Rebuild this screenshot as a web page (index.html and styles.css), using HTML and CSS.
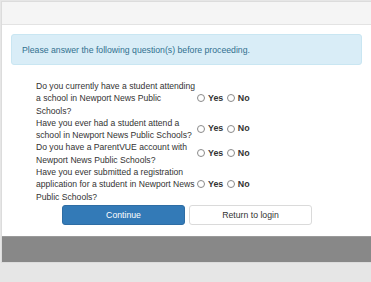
FILE: index.html
```html
<!DOCTYPE html>
<html lang="en">
<head>
    <meta charset="UTF-8">
    <title>Registration Questions</title>
    <link rel="stylesheet" href="styles.css">
</head>
<body>
    <div class="panel">
        <div class="panel-heading"></div>
        <div class="panel-body">
            <div class="alert">Please answer the following question(s) before proceeding.</div>
            <table class="questions">
                <tr>
                    <td class="question">Do you currently have a student attending a school in Newport News Public Schools?</td>
                    <td class="answer">
                        <label><input type="radio" name="q1"> Yes</label>
                        <label><input type="radio" name="q1"> No</label>
                    </td>
                </tr>
                <tr>
                    <td class="question">Have you ever had a student attend a school in Newport News Public Schools?</td>
                    <td class="answer">
                        <label><input type="radio" name="q2"> Yes</label>
                        <label><input type="radio" name="q2"> No</label>
                    </td>
                </tr>
                <tr>
                    <td class="question">Do you have a ParentVUE account with Newport News Public Schools?</td>
                    <td class="answer">
                        <label><input type="radio" name="q3"> Yes</label>
                        <label><input type="radio" name="q3"> No</label>
                    </td>
                </tr>
                <tr>
                    <td class="question">Have you ever submitted a registration application for a student in Newport News Public Schools?</td>
                    <td class="answer">
                        <label><input type="radio" name="q4"> Yes</label>
                        <label><input type="radio" name="q4"> No</label>
                    </td>
                </tr>
            </table>
            <div class="buttons">
                <button class="btn btn-primary">Continue</button>
                <button class="btn btn-default">Return to login</button>
            </div>
        </div>
        <div class="panel-footer"></div>
    </div>
</body>
</html>
```

FILE: styles.css
```css
* {
    margin: 0;
    padding: 0;
    box-sizing: border-box;
}

body {
    font-family: 'Liberation Sans', Arial, sans-serif;
    background: #e6e6e6;
    color: #333;
    overflow: hidden;
}

.panel {
    margin: 1px 0 0 1px;
    width: 372px;
    background: #fff;
    border: 1px solid #dcdcdc;
}

.panel-heading {
    height: 23px;
    background: #f5f5f5;
    border-bottom: 1px solid #e3e3e3;
}

.panel-body {
    padding: 9px 10px 11px 9px;
}

.alert {
    height: 31px;
    display: flex;
    align-items: center;
    padding-left: 10px;
    background: #d9edf7;
    border: 1px solid #c9e6f2;
    border-radius: 3px;
    color: #31708f;
    font-size: 8.7px;
}

.questions {
    border-collapse: collapse;
    margin: 15px 0 0 25px;
    font-size: 8.6px;
    line-height: 12.3px;
}

.question {
    width: 161px;
    padding: 0;
    vertical-align: middle;
}

.answer {
    vertical-align: middle;
    white-space: nowrap;
    font-weight: bold;
    font-size: 8.9px;
}

.answer label {
    display: inline-flex;
    align-items: center;
    gap: 2px;
    margin-right: 1px;
}

.answer input[type="radio"] {
    appearance: none;
    -webkit-appearance: none;
    width: 8px;
    height: 8px;
    border: 1px solid #8a8a8a;
    border-radius: 50%;
    background: #fff;
    margin: 0 1px 0 0;
}

.buttons {
    display: flex;
    justify-content: center;
    gap: 4px;
    margin-top: 2px;
    padding-left: 1px;
}

.btn {
    width: 123px;
    height: 20px;
    font-family: inherit;
    font-size: 8.7px;
    border-radius: 3px;
    cursor: pointer;
}

.btn-primary {
    background: #337ab7;
    border: 1px solid #2e6da4;
    color: #fff;
}

.btn-default {
    background: #fff;
    border: 1px solid #dadada;
    color: #333;
}

.panel-footer {
    height: 26px;
    background: #888;
    border-top: 1px solid #9a9a9a;
}
```
